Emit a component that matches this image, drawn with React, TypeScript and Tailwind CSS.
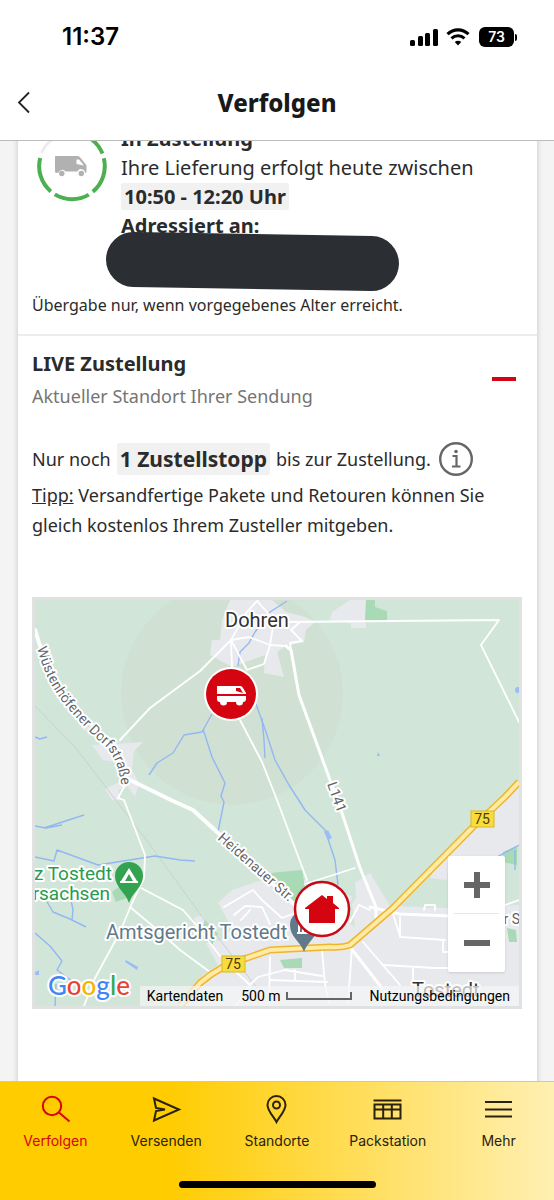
import React from "react";

const street = { fill: "none", stroke: "#ffffff", strokeLinejoin: "round" as const, strokeLinecap: "round" as const };
const water = { fill: "none", stroke: "#93b7f2", strokeWidth: 1.4, strokeLinejoin: "round" as const };
const halo = { stroke: "#ffffff", strokeWidth: 4, strokeLinejoin: "round" as const, paintOrder: "stroke" };

function StatusBar() {
  return (
    <div className="flex h-[74px] shrink-0 items-center justify-between pr-[37px] pl-[62px] font-['Inter',sans-serif]">
      <span className="text-2xl font-semibold text-black">11:37</span>
      <div className="flex items-center gap-[6px]">
        <svg width="30" height="20" viewBox="0 0 30 20" aria-hidden="true">
          <rect x="0" y="13" width="5" height="6" rx="1.5" />
          <rect x="8" y="9" width="5" height="10" rx="1.5" />
          <rect x="15" y="6" width="5" height="13" rx="1.5" />
          <rect x="23" y="2" width="5" height="17" rx="1.5" />
        </svg>
        <svg width="24" height="20" viewBox="0 0 24 20" aria-hidden="true">
          <path d="M1.500 7.200C7.500 1.500 16.500 1.500 22.500 7.200" fill="none" stroke="#000" strokeWidth="3.2" />
          <path d="M5.500 11.400C9.200 8 14.800 8 18.500 11.400" fill="none" stroke="#000" strokeWidth="3" />
          <path d="M8.800 15C10.700 13.300 13.300 13.300 15.200 15L12 18.500Z" />
        </svg>
        <div className="flex items-center gap-px pl-[3px]">
          <span className="flex h-5 w-[35px] items-center justify-center rounded-md bg-black text-sm font-semibold text-white">73</span>
          <span className="h-[7px] w-[2px] rounded-r-full bg-black" />
        </div>
      </div>
    </div>
  );
}

function Header() {
  return (
    <header className="relative flex h-[67px] shrink-0 items-center justify-center border-b border-[#bcbcbc] pb-2">
      <button aria-label="Zurück" className="absolute top-[17px] left-4">
        <svg width="16" height="24" viewBox="0 0 16 24" fill="none" stroke="#222" strokeWidth="1.8">
          <path d="M13 1.500 3 11.500 13 21.500" />
        </svg>
      </button>
      <h1 className="text-2xl font-extrabold text-[#191919]">Verfolgen</h1>
    </header>
  );
}

function ProgressRing() {
  return (
    <svg width="72" height="72" viewBox="0 0 72 72" fill="none" className="shrink-0" aria-hidden="true">
      <g stroke="#4caf50" strokeWidth="4">
        <path d="M40 3.2A33 33 0 0 1 66.500 23.500" />
        <path d="M67.800 28.300A33 33 0 0 1 56.800 61.700" />
        <path d="M52.800 64.600A33 33 0 0 1 18.800 64.400" />
        <path d="M14.800 61.400A33 33 0 0 1 4.200 28" />
      </g>
      <path d="M5.500 23A33 33 0 0 1 33 3.200" stroke="#ececec" strokeWidth="3" />
      <g transform="translate(18.500 25.500)">
        <path fill="#b1b1b1" d="M1.500 0.500H22.500C24 .5 25 1 26 2.200L31 8.500C32 9.700 32 10 32 11V15.500C32 17 31.500 17.300 30.500 17.300A3.900 3.900 0 0 0 23 16H11A3.900 3.900 0 0 0 4 17.300H2C1 17.300.5 17 .5 16V1.500C.5.800.8.500 1.500.500Z" />
        <path fill="#fff" d="M22 4H24.500L29.500 10L22 8.500Z" />
        <circle cx="7.300" cy="18" r="2.700" fill="#b1b1b1" />
        <circle cx="26.800" cy="18" r="2.700" fill="#b1b1b1" />
      </g>
    </svg>
  );
}

function MapDrawing() {
  return (
    <svg viewBox="35 600 484 406" preserveAspectRatio="xMidYMid slice" className="block h-full w-full font-['Roboto',sans-serif]">
      <rect x="-500" y="300" width="1600" height="1000" fill="#d1e6d9" />
      <circle cx="232" cy="694" r="111" fill="#d0e1d3" />

      <g fill="#e8e9ed">
        <path d="M230 600H272L286 612 305 617 315 622 306 630 304 642 286 646 277 652 284 677 264 673 265 655 232 667 210 655 212 640 220 640 222 620Z" />
        <path d="M330 620 332 612 350 600H366V628H351V623Z" />
        <path d="M92 745 116 744 143 742 134 751 132 770 139 783 135 797 128 787 118 790 121 800 112 800 105 789 120 782 118 762 103 760Z" />
        <path d="M74 716 90 728 84 731Z" />
        <path d="M178 1006 203 975 218 965 206 943 222 940 233 930 218 903 232 890 262 880 280 893 305 880 356 898 355 883 370 873 390 906 448 908 519 905V1006Z" />
        <path d="M519 782V845L500 858 470 862 448 862 447 880 430 878 440 860 505 796Z" />
        <path d="M194 918 203 915 205 925 196 930Z" />
      </g>
      <g fill="#a7dab5">
        <path d="M366 600H375V607L387 611V620H365Z" />
        <path d="M270 873 302 870 306 893 292 903 280 896Z" />
        <path d="M280 960 302 958V968H284Z" />
        <path d="M205 920 218 934 212 945 200 936Z" />
        <path d="M112 892 120 886 127 898 116 902Z" />
        <path d="M503 852 517 846V865L503 862Z" />
        <path d="M507 928 516 930 517 942 509 942Z" />
      </g>
      <path d="M355 883 350 905 345 920 355 927 352 904 356 898Z" fill="#d1e6d9" />

      <path d="M35 706 75 747 108 790 148 842 203 918 257 988" fill="none" stroke="#c8d3d0" strokeWidth="1" />

      <g {...water}>
        <path d="M287 601 270 612 255 632 249 643 240 652 238 666" />
        <path d="M256 704 266 732 275 760 289 785 305 810 325 830 335 860 338 885" />
        <path d="M262 718 264 740 265 758" />
        <path d="M212 714 202 732 184 735 173 753 157 763 149 775" />
        <path d="M203 729 212 757 225 783 221 796 224 802 218 832" />
        <path d="M35 826 46 828 62 825M44 828 84 815" />
        <path d="M35 857 54 861 57 850 98 865 155 856 180 860 195 861" />
        <path d="M46 900 53 912 70 919 86 927M70 895 73 910 72 920" />
        <path d="M35 933 50 946 62 961 57 970 72 981M56 984 55 1006" />
        <path d="M35 737 40 739 47 737" />
        <path d="M497 857 519 845M515 850V870" />
      </g>
      <g fill="#9dbcf5">
        <path d="M126 960 138 967 137 970 125 962Z" />
        <path d="M324 832 328 830 332 838 328 840Z" />
        <circle cx="518" cy="690" r="3" />
        <path d="M378 752 380 756 377 756Z" />
        <path d="M35 972 39 970V975H35Z" />
      </g>

      <g {...street} strokeWidth="1.8">
        <path d="M231 640 200 671 150 708 120 740" strokeWidth="2" />
        <path d="M240 720 262 762 277 800 307 880" />
        <path d="M231 640 247 612 258 600M258 602 274 620 270 645 286 646M231 640 249 637 270 645M231 640 232 667M231 640 247 670 264 664 270 645M300 622 291 630 302 641 290 643 291 650" />
        <path d="M285 622 499 620 481 645 519 722" />
        <path d="M124 787 118 798 124 800 145 855 144 878 132 903 120 932 94 980 84 1006" />
        <path d="M141 888 183 910 196 925 220 956M130 907 160 932 180 950 210 972" />
        <path d="M224 907 253 890 262 900 282 918 295 913M234 915 245 906 262 907 270 924M232 932 252 930 278 940M250 910 241 920" />
        <path d="M305 884 355 868M350 922 359 905 370 910M393 914 400 936 400 917M400 917V937L445 940M424 910 425 905H435V910" />
        <path d="M236 972 250 985 236 1006M250 985 258 977 285 970 322 976M322 950 325 985 329 1002M352 948 348 1003M363 942 400 985M270 980 327 982M295 970V980M383 965 435 968H450M413 967V982M443 940V952H450" />
        <path d="M505 905 519 900M270 957 269 1002" />
      </g>
      <g {...street}>
        <path d="M35 630 42 652 52 680 70 705 95 727 108 742 118 762 126 778 173 801 193 810 217 832 295 905" strokeWidth="4" />
        <path d="M286 646 291 650 299 695 330 780 342 813 360 868 376 907V917" strokeWidth="3" />
        <path d="M350 947 385 992M370 907 400 914 450 916" strokeWidth="3" />
      </g>
      <g fill="none" strokeLinejoin="round">
        <path d="M519 782 505 797 473 827 393 908 350 945Q342 948 330 947L270 950 247 958Q222 964 200 983L180 1006" stroke="#efb52f" strokeWidth="7" />
        <path d="M519 782 505 797 473 827 393 908 350 945Q342 948 330 947L270 950 247 958Q222 964 200 983L180 1006" stroke="#ffeba3" strokeWidth="4" />
      </g>

      <g fontSize="14" textAnchor="middle" fill="#4a3b10">
        <rect x="471" y="811" width="23" height="16" fill="#f9dc3b" stroke="#d8b927" />
        <text x="482" y="824">75</text>
        <rect x="222" y="956" width="23" height="16" fill="#f9dc3b" stroke="#d8b927" />
        <text x="233" y="969">75</text>
      </g>

      <defs>
        <path id="dorfstrasse" d="M37 648Q46 682 66 706T103 744T123 798" />
        <path id="heidenauer" d="M217 839 299 911" />
      </defs>
      <g fontSize="14" fill="#5f6368">
        <text {...halo}><textPath href="#dorfstrasse">Wüstenhöfener Dorfstraße</textPath></text>
        <text {...halo}><textPath href="#heidenauer">Heidenauer Str.</textPath></text>
        <text {...halo} transform="translate(327 784) rotate(70)">L141</text>
        <text {...halo} x="496" y="924">er Str.</text>
      </g>
      <text {...halo} x="225" y="627" fontSize="20" fill="#303134">Dohren</text>
      <text {...halo} x="412" y="997" fontSize="20" fill="#303134">Tostedt</text>
      <g fontSize="19" fill="#2b9a50">
        <text {...halo} x="112" y="880" textAnchor="end">z Tostedt</text>
        <text {...halo} x="110" y="900" textAnchor="end">rsachsen</text>
      </g>
      <text {...halo} x="106" y="939" fontSize="20" fill="#62798a">Amtsgericht Tostedt</text>

      <path d="M129 903C126 893 115 887 115 876A14 14 0 0 1 143 876C143 887 132 893 129 903Z" fill="#34a34f" />
      <path fillRule="evenodd" fill="#fff" d="M129 868 137 881H138V883H120V881H121ZM129 874 125 881H133Z" />
      <path d="M304 952C301 942 290 937 290 925A14 14 0 0 1 318 925C318 937 307 942 304 952Z" fill="#62798a" />
      <path d="M297 933H311M299 932V924M303 932V924" stroke="#fff" strokeWidth="2" />

      <circle cx="231" cy="694" r="27" fill="#fff" />
      <circle cx="231" cy="694" r="25" fill="#d40511" />
      <g fill="#fff">
        <path d="M217 686H240Q242 686 243 688L246 693V694H217Z" />
        <path d="M217 696H246V699Q246 702 243 702A3.500 3.500 0 0 1 236 702H227A3.500 3.500 0 0 1 220 702Q217 702 217 699Z" />
        <path d="M236 688H240L243 693L236 691Z" fill="#d40511" />
      </g>
      <circle cx="322" cy="909" r="27" fill="#fff" stroke="#c90a16" strokeWidth="2.500" />
      <path d="M305 908 322 895 327 899V896H333V903L339 908V909H335V923H309V909H305Z" fill="#d40511" />

      <g {...halo} fontSize="26" fontWeight="500" className="font-['Lato',sans-serif]">
        <text x="48" y="995">
          <tspan fill="#4285f4">G</tspan><tspan fill="#ea4335">o</tspan><tspan fill="#f4b400">o</tspan><tspan fill="#4285f4">g</tspan><tspan fill="#34a853">l</tspan><tspan fill="#ea4335">e</tspan>
        </text>
      </g>
    </svg>
  );
}

function LiveMap() {
  return (
    <div className="relative mt-[57px] mr-px h-[412px] overflow-hidden border-3 border-[#e0e1e1]">
      <MapDrawing />
      <div className="absolute right-[14px] bottom-[34px] flex w-[57px] flex-col rounded-xs bg-white shadow">
        <button aria-label="Vergrößern" className="flex h-[57px] items-center justify-center">
          <svg width="26" height="26" viewBox="0 0 26 26" stroke="#666" strokeWidth="6"><path d="M0 13H26M13 0V26" /></svg>
        </button>
        <span className="mx-[6px] h-px bg-[#e6e6e6]" />
        <button aria-label="Verkleinern" className="flex h-[58px] items-center justify-center">
          <svg width="26" height="6" viewBox="0 0 26 6" stroke="#666" strokeWidth="6"><path d="M0 3H26" /></svg>
        </button>
      </div>
      <div className="absolute right-0 bottom-0 flex h-5 items-center bg-[#f5f5f5]/70 pr-[9px] pl-[7px] font-['Roboto',sans-serif] text-sm text-black">
        <button className="mr-[18px]">Kartendaten</button>
        <span className="mr-[5px]">500 m</span>
        <span className="mr-[18px] h-2 w-[66px] border-2 border-t-0 border-[#666]" />
        <a href="#nutzungsbedingungen">Nutzungsbedingungen</a>
      </div>
    </div>
  );
}

function Shipment() {
  return (
    <main className="min-h-0 flex-1 overflow-hidden bg-[#f4f4f4] pr-[17px] pl-[18px] text-[#2b2b2b]">
      <div className="-mt-[17px] min-h-full bg-white pb-24 shadow-[0_0_6px_rgba(0,0,0,0.2)]">
        <section className="border-b-2 border-[#ececec] px-[14px] pb-[17px]">
          <div className="flex gap-[13px] pl-1 text-xl leading-[29px]">
            <div className="mt-[6px]"><ProgressRing /></div>
            <div>
              <h2 className="font-bold">In Zustellung</h2>
              <p>Ihre Lieferung erfolgt heute zwischen</p>
              <p><strong className="rounded-xs bg-[#f1f1f1] px-[3px]">10:50 - 12:20 Uhr</strong></p>
              <p className="font-bold">Adressiert an:</p>
              <div className="-mt-[6px] -ml-[15px] h-[55px] w-[293px] rotate-1 rounded-full bg-[#2b2f33]" />
            </div>
          </div>
          <p className="mt-1 text-base leading-6">Übergabe nur, wenn vorgegebenes Alter erreicht.</p>
        </section>
        <section className="px-[14px] pt-3">
          <div className="flex items-center justify-between pr-[7px]">
            <div>
              <h2 className="text-xl leading-8 font-bold">LIVE Zustellung</h2>
              <p className="text-lg leading-8 text-[#757575]">Aktueller Standort Ihrer Sendung</p>
            </div>
            <button aria-label="Einklappen" className="pt-3 pb-[14px]"><span className="block h-1 w-6 bg-[#d40511]" /></button>
          </div>
          <div className="mt-[26px] flex h-[42px] items-center text-lg">
            <span>Nur noch</span>
            <strong className="mx-[6px] rounded-xs bg-[#f1f1f1] px-[3px] text-[21px] leading-8">1 Zustellstopp</strong>
            <span>bis zur Zustellung.</span>
            <button aria-label="Information" className="ml-2">
              <svg width="34" height="36" viewBox="0 0 34 36" fill="none" stroke="#666" strokeWidth="2.400">
                <circle cx="17" cy="18" r="15.800" />
                <path d="M13.500 15H17.500V25.500M13 25.500H21.500" strokeWidth="2.200" />
                <circle cx="17" cy="10.500" r="1.800" fill="#666" stroke="none" />
              </svg>
            </button>
          </div>
          <p className="text-lg leading-[30px]"><span className="underline">Tipp:</span> Versandfertige Pakete und Retouren können Sie gleich kostenlos Ihrem Zusteller mitgeben.</p>
          <LiveMap />
        </section>
      </div>
    </main>
  );
}

const tabs = [
  { label: "Verfolgen", active: true, icon: <><circle cx="12" cy="12" r="9.200" /><path d="M19 18.500 29.500 27.500" /></> },
  { label: "Versenden", icon: <path d="M3 4.500 28 15.500 3 26.500 5 17 14 15.500 5 14Z" /> },
  { label: "Standorte", icon: <><path d="M15.500 28C13 23 6.500 17 6.500 11A9 9 0 0 1 24.500 11C24.500 17 18 23 15.500 28Z" /><circle cx="15.500" cy="11" r="3.500" /></> },
  { label: "Packstation", icon: <path d="M1.500 6.500H29.500M2.500 10.500H28.500V24.500H2.500ZM2.500 15.500H28.500M11.200 10.500V24.500M19.800 10.500V24.500" /> },
  { label: "Mehr", icon: <path d="M2 8H29M2 15.500H29M2 22.500H29" /> },
];

function TabBar() {
  return (
    <nav className="flex h-[119px] shrink-0 flex-col justify-between border-t border-[#d9c98a] bg-[linear-gradient(to_right,#ffcc00_30%,#ffe57f_79%,#fff0b2_100%)] pb-3">
      <ul className="grid grid-cols-5 pt-3">
        {tabs.map((t) => (
          <li key={t.label}>
            <a href={"#" + t.label.toLowerCase()} className={t.active ? "flex flex-col items-center gap-[6px] font-['Inter',sans-serif] text-sm text-[#d40511]" : "flex flex-col items-center gap-[6px] font-['Inter',sans-serif] text-sm text-[#2a230c]"}>
              <svg width="31" height="31" viewBox="0 0 31 31" fill="none" stroke="currentColor" strokeWidth="2">{t.icon}</svg>
              {t.label}
            </a>
          </li>
        ))}
      </ul>
      <div className="h-[7px] w-[197px] self-center rounded-full bg-black" />
    </nav>
  );
}

export default function App() {
  return (
    <div className="flex h-screen flex-col bg-white font-['Noto_Sans',sans-serif]">
      <StatusBar />
      <Header />
      <Shipment />
      <TabBar />
    </div>
  );
}
